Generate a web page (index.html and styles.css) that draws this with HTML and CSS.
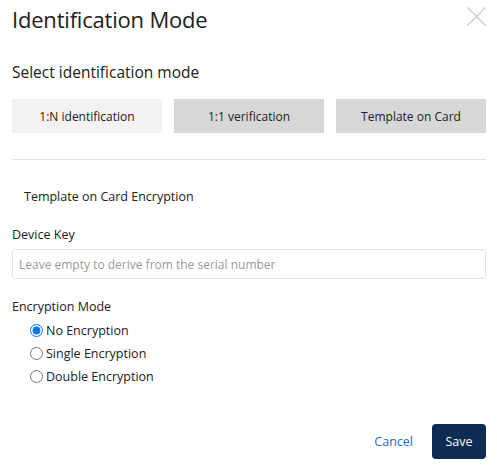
FILE: index.html
```html
<!DOCTYPE html>
<html lang="en">
<head>
<meta charset="utf-8">
<title>Identification Mode</title>
<link rel="stylesheet" href="styles.css">
</head>
<body>
<div class="dialog">
  <div class="header">
    <h1 class="title">Identification Mode</h1>
    <button class="close" aria-label="Close">
      <svg width="19" height="19" viewBox="0 0 19 19"><path d="M0.5 0.5 L18.5 18.5 M18.5 0.5 L0.5 18.5" stroke="#c8c8c8" stroke-width="1.3" fill="none"/></svg>
    </button>
  </div>
  <h2 class="subtitle">Select identification mode</h2>
  <div class="modes">
    <button class="mode active">1:N identification</button>
    <button class="mode">1:1 verification</button>
    <button class="mode">Template on Card</button>
  </div>
  <hr class="divider">
  <div class="section-title">Template on Card Encryption</div>
  <label class="label" for="key">Device Key</label>
  <input class="input" id="key" type="text" placeholder="Leave empty to derive from the serial number">
  <div class="label enc">Encryption Mode</div>
  <div class="radios">
    <label class="radio"><input type="radio" name="enc" checked> No Encryption</label>
    <label class="radio"><input type="radio" name="enc"> Single Encryption</label>
    <label class="radio"><input type="radio" name="enc"> Double Encryption</label>
  </div>
  <div class="footer">
    <button class="cancel">Cancel</button>
    <button class="save">Save</button>
  </div>
</div>
</body>
</html>
```
FILE: styles.css
```css
* { box-sizing: border-box; }
html, body { margin: 0; padding: 0; background: #fff; }
body {
  font-family: "Open Sans", "Noto Sans", sans-serif;
  color: #212121;
  font-size: 12.5px;
}
.dialog { padding: 0 11px 0 12px; }
.header {
  display: flex;
  justify-content: space-between;
  align-items: flex-start;
  height: 38px;
}
.title {
  margin: 0;
  font-weight: 400;
  font-size: 22px;
  line-height: 38px;
  letter-spacing: -0.2px;
}
.close {
  margin: 7px 0 0 0;
  padding: 0;
  border: 0;
  background: none;
  width: 19px;
  height: 19px;
  display: block;
}
.close svg { display: block; }
.subtitle {
  margin: 23px 0 0 0;
  font-weight: 400;
  font-size: 15.5px;
  line-height: 22px;
}
.modes {
  margin-top: 16px;
  display: grid;
  grid-template-columns: repeat(3, 1fr);
  gap: 12px;
}
.mode {
  height: 34px;
  border: 0;
  border-radius: 0;
  background: #d7d7d7;
  font-family: inherit;
  font-size: 12px;
  color: #212121;
  padding: 0;
}
.mode.active { background: #f3f1f2; }
.divider {
  margin: 26px 0 0 0;
  border: 0;
  border-top: 1px solid #e2e2e2;
  height: 0;
}
.section-title {
  margin-top: 27px;
  padding-left: 12px;
  line-height: 20px;
}
.label {
  display: block;
  margin-top: 18px;
  line-height: 20px;
}
.input {
  display: block;
  margin-top: 4px;
  width: 100%;
  height: 30px;
  border: 1px solid #e3e3e3;
  border-radius: 3px;
  padding: 0 6px;
  font-family: inherit;
  font-size: 12px;
  color: #212121;
}
.input::placeholder { color: #9a9a9a; }
.enc { margin-top: 18px; }
.radios { margin-top: 2px; padding-left: 18px; }
.radio {
  display: flex;
  align-items: center;
  height: 23px;
}
.radio input {
  margin: 0 3px 0 0;
  width: 13px;
  height: 13px;
}
.footer {
  margin-top: 36px;
  display: flex;
  justify-content: flex-end;
  align-items: center;
  gap: 19px;
}
.cancel {
  border: 0;
  background: none;
  padding: 0;
  font-family: inherit;
  font-size: 12.5px;
  color: #1b6ac9;
}
.save {
  width: 54px;
  height: 35px;
  border: 0;
  border-radius: 4px;
  background: #0c2c54;
  color: #fff;
  font-family: inherit;
  font-size: 12.5px;
  padding: 0;
}
```
